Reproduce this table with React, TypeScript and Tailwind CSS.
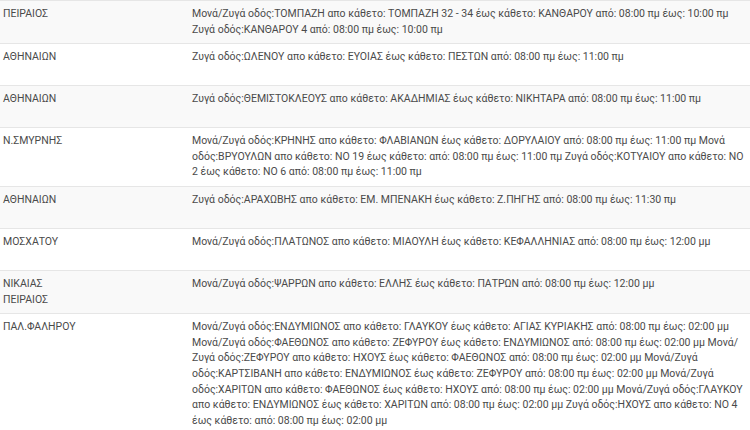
const rows = [
  {
    area: "ΠΕΙΡΑΙΟΣ",
    streets:
      "Μονά/Ζυγά οδός:ΤΟΜΠΑΖΗ απο κάθετο: ΤΟΜΠΑΖΗ 32 - 34 έως κάθετο: ΚΑΝΘΑΡΟΥ από: 08:00 πμ έως: 10:00 πμ Ζυγά οδός:ΚΑΝΘΑΡΟΥ 4 από: 08:00 πμ έως: 10:00 πμ",
  },
  {
    area: "ΑΘΗΝΑΙΩΝ",
    streets:
      "Ζυγά οδός:ΩΛΕΝΟΥ απο κάθετο: ΕΥΟΙΑΣ έως κάθετο: ΠΕΣΤΩΝ από: 08:00 πμ έως: 11:00 πμ",
  },
  {
    area: "ΑΘΗΝΑΙΩΝ",
    streets:
      "Ζυγά οδός:ΘΕΜΙΣΤΟΚΛΕΟΥΣ απο κάθετο: ΑΚΑΔΗΜΙΑΣ έως κάθετο: ΝΙΚΗΤΑΡΑ από: 08:00 πμ έως: 11:00 πμ",
  },
  {
    area: "Ν.ΣΜΥΡΝΗΣ",
    streets:
      "Μονά/Ζυγά οδός:ΚΡΗΝΗΣ απο κάθετο: ΦΛΑΒΙΑΝΩΝ έως κάθετο: ΔΟΡΥΛΑΙΟΥ από: 08:00 πμ έως: 11:00 πμ Μονά οδός:ΒΡΥΟΥΛΩΝ απο κάθετο: ΝΟ 19 έως κάθετο: από: 08:00 πμ έως: 11:00 πμ Ζυγά οδός:ΚΟΤΥΑΙΟΥ απο κάθετο: ΝΟ 2 έως κάθετο: ΝΟ 6 από: 08:00 πμ έως: 11:00 πμ",
  },
  {
    area: "ΑΘΗΝΑΙΩΝ",
    streets:
      "Ζυγά οδός:ΑΡΑΧΩΒΗΣ απο κάθετο: ΕΜ. ΜΠΕΝΑΚΗ έως κάθετο: Ζ.ΠΗΓΗΣ από: 08:00 πμ έως: 11:30 πμ",
  },
  {
    area: "ΜΟΣΧΑΤΟΥ",
    streets:
      "Μονά/Ζυγά οδός:ΠΛΑΤΩΝΟΣ απο κάθετο: ΜΙΑΟΥΛΗ έως κάθετο: ΚΕΦΑΛΛΗΝΙΑΣ από: 08:00 πμ έως: 12:00 μμ",
  },
  {
    area: "ΝΙΚΑΙΑΣ ΠΕΙΡΑΙΟΣ",
    streets:
      "Μονά/Ζυγά οδός:ΨΑΡΡΩΝ απο κάθετο: ΕΛΛΗΣ έως κάθετο: ΠΑΤΡΩΝ από: 08:00 πμ έως: 12:00 μμ",
  },
  {
    area: "ΠΑΛ.ΦΑΛΗΡΟΥ",
    streets:
      "Μονά/Ζυγά οδός:ΕΝΔΥΜΙΩΝΟΣ απο κάθετο: ΓΛΑΥΚΟΥ έως κάθετο: ΑΓΙΑΣ ΚΥΡΙΑΚΗΣ από: 08:00 πμ έως: 02:00 μμ Μονά/Ζυγά οδός:ΦΑΕΘΩΝΟΣ απο κάθετο: ΖΕΦΥΡΟΥ έως κάθετο: ΕΝΔΥΜΙΩΝΟΣ από: 08:00 πμ έως: 02:00 μμ Μονά/Ζυγά οδός:ΖΕΦΥΡΟΥ απο κάθετο: ΗΧΟΥΣ έως κάθετο: ΦΑΕΘΩΝΟΣ από: 08:00 πμ έως: 02:00 μμ Μονά/Ζυγά οδός:ΚΑΡΤΣΙΒΑΝΗ απο κάθετο: ΕΝΔΥΜΙΩΝΟΣ έως κάθετο: ΖΕΦΥΡΟΥ από: 08:00 πμ έως: 02:00 μμ Μονά/Ζυγά οδός:ΧΑΡΙΤΩΝ απο κάθετο: ΦΑΕΘΩΝΟΣ έως κάθετο: ΗΧΟΥΣ από: 08:00 πμ έως: 02:00 μμ Μονά/Ζυγά οδός:ΓΛΑΥΚΟΥ απο κάθετο: ΕΝΔΥΜΙΩΝΟΣ έως κάθετο: ΧΑΡΙΤΩΝ από: 08:00 πμ έως: 02:00 μμ Ζυγά οδός:ΗΧΟΥΣ απο κάθετο: ΝΟ 4 έως κάθετο: από: 08:00 πμ έως: 02:00 μμ",
  },
];

export default function App() {
  return (
    <div className="h-[430px] w-[750px] overflow-hidden bg-white font-['Roboto',sans-serif] text-[10.5px] leading-[15.6px] text-[#4a4a4a]">
      {rows.map((row, index) => (
        <div
          key={index}
          className={`grid min-h-[42px] grid-cols-[192px_559px] border-t border-[#e6e6e6] pt-[5px] pb-[6px] ${
            index % 2 === 0 ? "bg-[#f9f9f9]" : "bg-white"
          }`}
        >
          <div className="w-[80px] pl-[3px]">{row.area}</div>
          <div>{row.streets}</div>
        </div>
      ))}
    </div>
  );
}
